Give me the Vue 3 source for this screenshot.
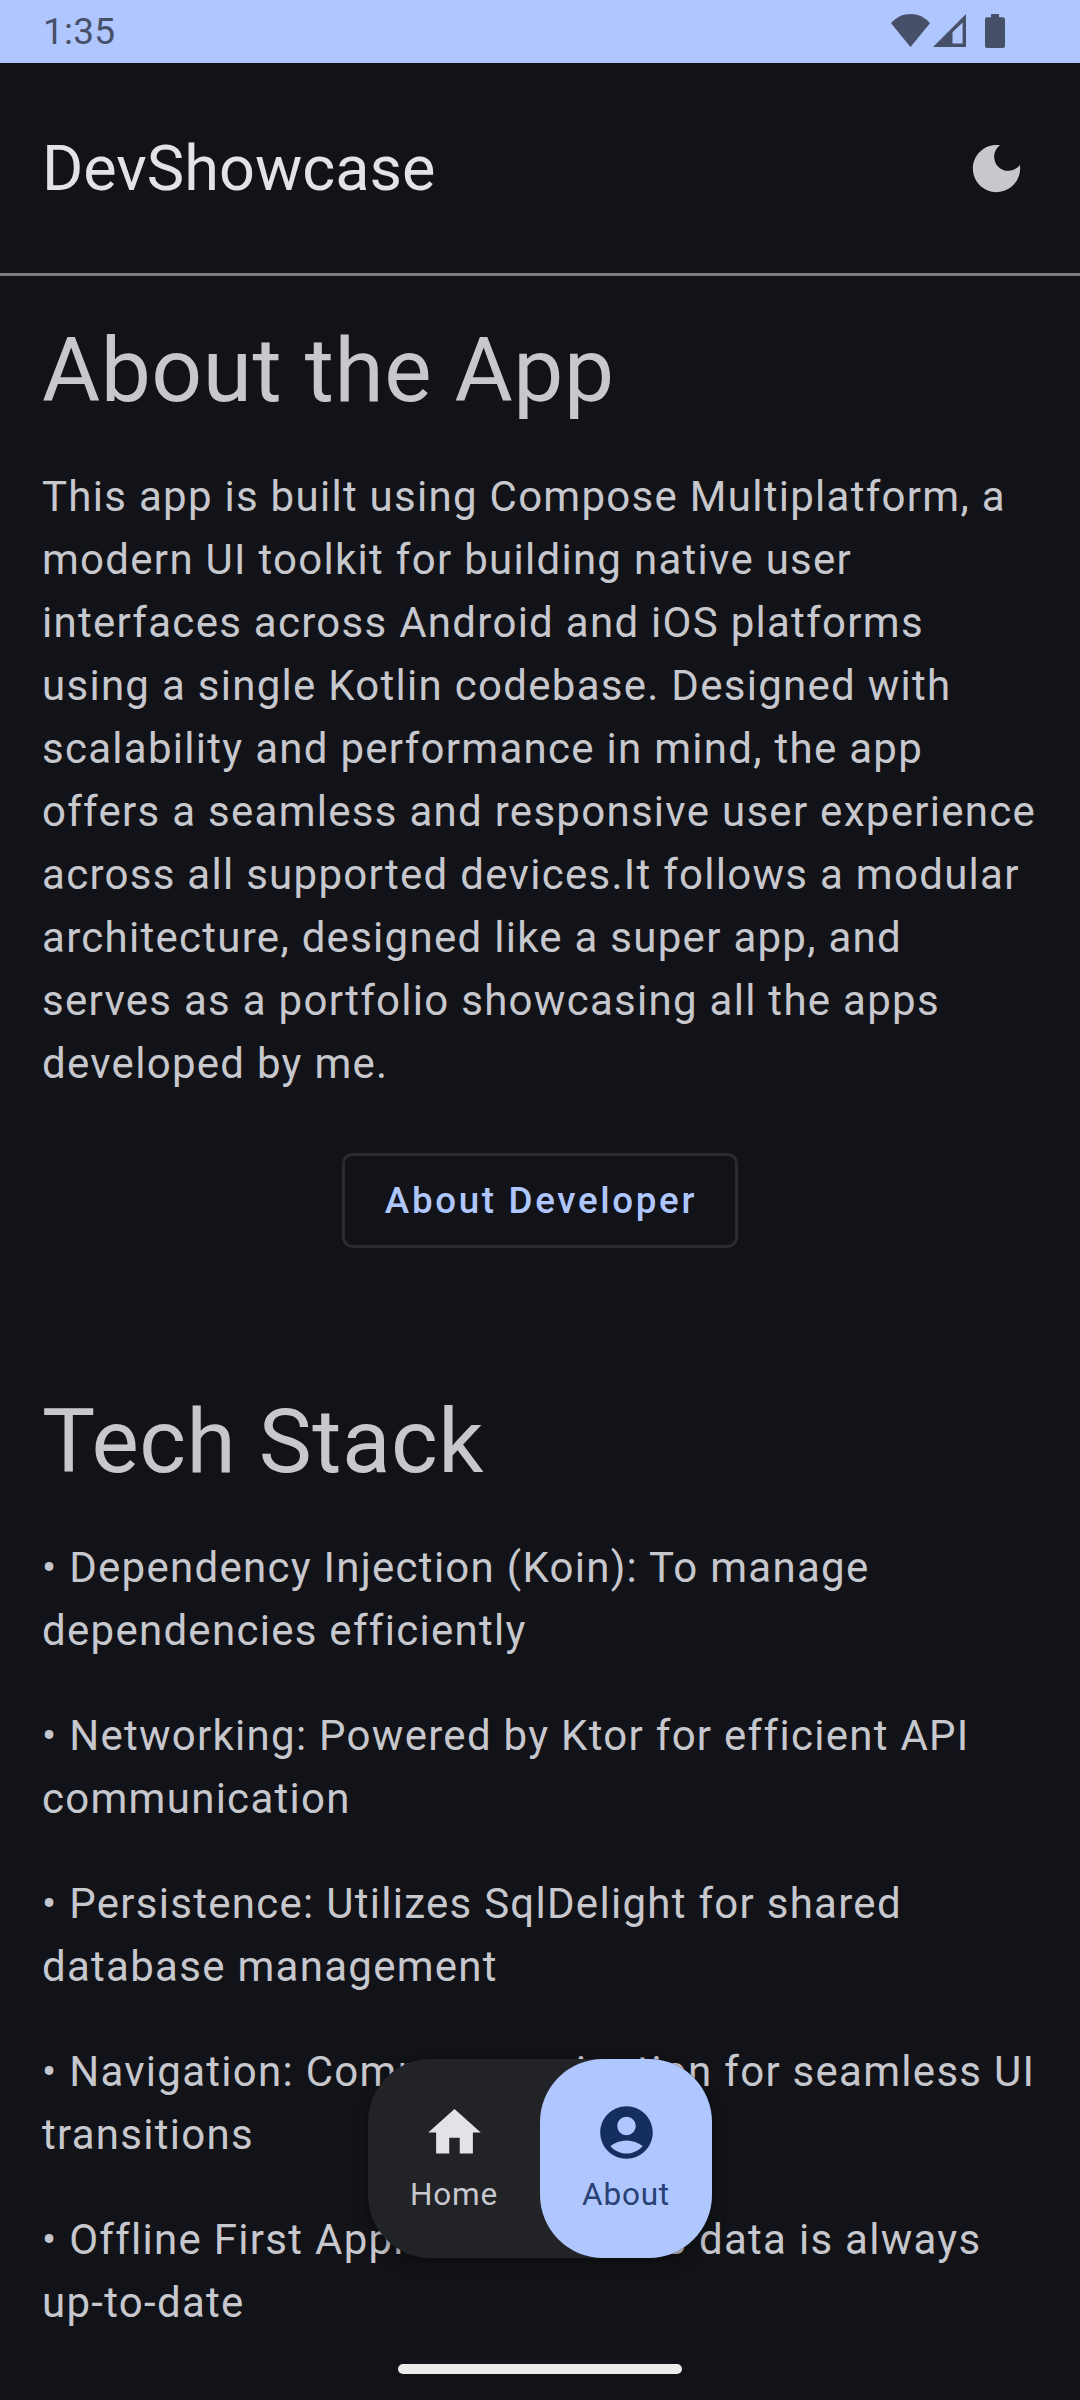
<script setup>
const techStack = [
  'Dependency Injection (Koin): To manage dependencies efficiently',
  'Networking: Powered by Ktor for efficient API communication',
  'Persistence: Utilizes SqlDelight for shared database management',
  'Navigation: Compose navigation for seamless UI transitions',
  'Offline First Approach: Ensures data is always up-to-date',
]

const tabs = [
  {
    label: 'Home',
    active: false,
    icon: 'M10 20v-6h4v6h5v-8h3L12 3 2 12h3v8z',
  },
  {
    label: 'About',
    active: true,
    icon: 'M12 2C6.48 2 2 6.48 2 12s4.48 10 10 10 10-4.48 10-10S17.52 2 12 2zM12 6c1.93 0 3.5 1.57 3.5 3.5S13.93 13 12 13s-3.5-1.57-3.5-3.5S10.07 6 12 6zM12 20c-2.03 0-4.43-.82-6.14-2.88C7.55 15.8 9.68 15 12 15s4.45.8 6.14 2.12C16.43 19.18 14.03 20 12 20z',
  },
]
</script>

<template>
  <div class="screen">
    <div class="status-bar">
      <span class="clock">1:35</span>
      <div class="status-icons">
        <svg class="wifi" width="39" height="33" viewBox="0 0 39 33">
          <path d="M0 9.2C5.2 3.2 12 0 19.5 0S33.8 3.2 39 9.2L19.5 33z" />
        </svg>
        <svg class="signal" width="33" height="33" viewBox="0 0 33 33">
          <path fill-rule="evenodd" d="M33 0v33H0zM29.6 8.6L19.5 18.2v11.4h10.1z" />
        </svg>
        <svg class="battery" width="20" height="34" viewBox="0 0 20 34">
          <path d="M6 0h8v3.3h4q2 0 2 2V32q0 2-2 2H2q-2 0-2-2V5.3q0-2 2-2h4z" />
        </svg>
      </div>
    </div>

    <header class="app-bar">
      <h1 class="app-title">DevShowcase</h1>
      <button class="icon-button" aria-label="Toggle theme">
        <svg width="63" height="63" viewBox="0 0 24 24">
          <path d="M12 3c-4.97 0-9 4.03-9 9s4.03 9 9 9 9-4.03 9-9c0-.46-.04-.92-.1-1.36-.98 1.37-2.58 2.26-4.4 2.26-2.98 0-5.4-2.42-5.4-5.4 0-1.81.89-3.42 2.26-4.4-.44-.06-.9-.1-1.36-.1z" />
        </svg>
      </button>
    </header>

    <main class="content">
      <h2 class="heading">About the App</h2>
      <p class="body intro">
        This app is built using Compose Multiplatform, a modern UI toolkit for building native user
        interfaces across Android and iOS platforms using a single Kotlin codebase. Designed with
        scalability and performance in mind, the app offers a seamless and responsive user experience
        across all supported devices.It follows a modular architecture, designed like a super app,
        and serves as a portfolio showcasing all the apps developed by me.
      </p>
      <button class="outlined-button">About Developer</button>

      <h2 class="heading">Tech Stack</h2>
      <div class="stack">
        <p v-for="item in techStack" :key="item" class="body">• {{ item }}</p>
      </div>
    </main>

    <nav class="bottom-nav">
      <div v-for="tab in tabs" :key="tab.label" class="tab" :class="{ active: tab.active }">
        <svg width="63" height="63" viewBox="0 0 24 24"><path :d="tab.icon" /></svg>
        <span class="tab-label">{{ tab.label }}</span>
      </div>
    </nav>

    <div class="gesture-bar"></div>
  </div>
</template>

<style>
body {
  margin: 0;
  background: #121318;
}
</style>

<style scoped>
.screen {
  position: relative;
  box-sizing: border-box;
  width: 1080px;
  height: 2400px;
  overflow: hidden;
  background: #121318;
  color: #c7c7ce;
  font-family: Roboto, sans-serif;
}

.status-bar {
  display: flex;
  justify-content: space-between;
  height: 63px;
  padding: 0 75px 0 43px;
  background: #b0c6ff;
  color: #475069;
}

.clock {
  font-size: 37px;
  line-height: 63px;
  letter-spacing: 0.2px;
}

.status-icons {
  display: flex;
  align-items: flex-start;
  padding-top: 14px;
}

.status-icons svg {
  display: block;
  fill: #475069;
}

.signal {
  margin-left: 3px;
}

.battery {
  margin-left: 19px;
}

.app-bar {
  display: flex;
  align-items: center;
  justify-content: space-between;
  height: 210px;
  padding: 0 52px 0 42px;
  border-bottom: 3px solid #7c7d82;
}

.app-title {
  margin: 1px 0 0;
  color: #e2e2e9;
  font-size: 63px;
  font-weight: 400;
  line-height: 73px;
}

.icon-button {
  padding: 0;
  border: 0;
  background: none;
}

.icon-button svg {
  display: block;
  fill: #c7c7ce;
}

.content {
  display: flex;
  flex-direction: column;
  padding: 47px 42px 0;
}

.heading {
  margin: 0;
  font-size: 89.25px;
  font-weight: 400;
  line-height: 95px;
  letter-spacing: 0.5px;
}

.body {
  margin: 0;
  font-size: 42px;
  line-height: 63px;
  letter-spacing: 1.28px;
}

.intro {
  margin-top: 47px;
}

.outlined-button {
  align-self: center;
  box-sizing: border-box;
  width: 396px;
  height: 95px;
  margin: 58px 0 146px;
  padding: 0 0 0 2px;
  border: 3px solid #2b2c31;
  border-radius: 10.5px;
  background: none;
  color: #b0c6ff;
  font-family: inherit;
  font-size: 36.75px;
  font-weight: 500;
  line-height: 42px;
  letter-spacing: 2.66px;
  white-space: nowrap;
}

.stack {
  display: flex;
  flex-direction: column;
  gap: 42px;
  margin-top: 47px;
}

.bottom-nav {
  position: absolute;
  top: 2059px;
  left: 368px;
  display: flex;
  border-radius: 63px;
  background: #222327;
  box-shadow: 0 8px 16px rgba(0, 0, 0, 0.26), 0 0 4px rgba(0, 0, 0, 0.1);
}

.tab {
  display: flex;
  flex-direction: column;
  align-items: center;
  box-sizing: border-box;
  width: 172px;
  height: 199px;
  padding-top: 42px;
  border-radius: 63px;
  color: #c7c7ce;
}

.tab svg {
  display: block;
  fill: #e2e2e9;
}

.tab-label {
  margin-top: 10px;
  font-size: 31.5px;
  line-height: 41px;
  letter-spacing: 0.8px;
}

.tab.active {
  background: #b0c6ff;
  color: #294275;
}

.tab.active svg {
  fill: #152e60;
}

.gesture-bar {
  position: absolute;
  bottom: 26px;
  left: 398px;
  width: 284px;
  height: 10px;
  border-radius: 5px;
  background: #ececec;
}
</style>
